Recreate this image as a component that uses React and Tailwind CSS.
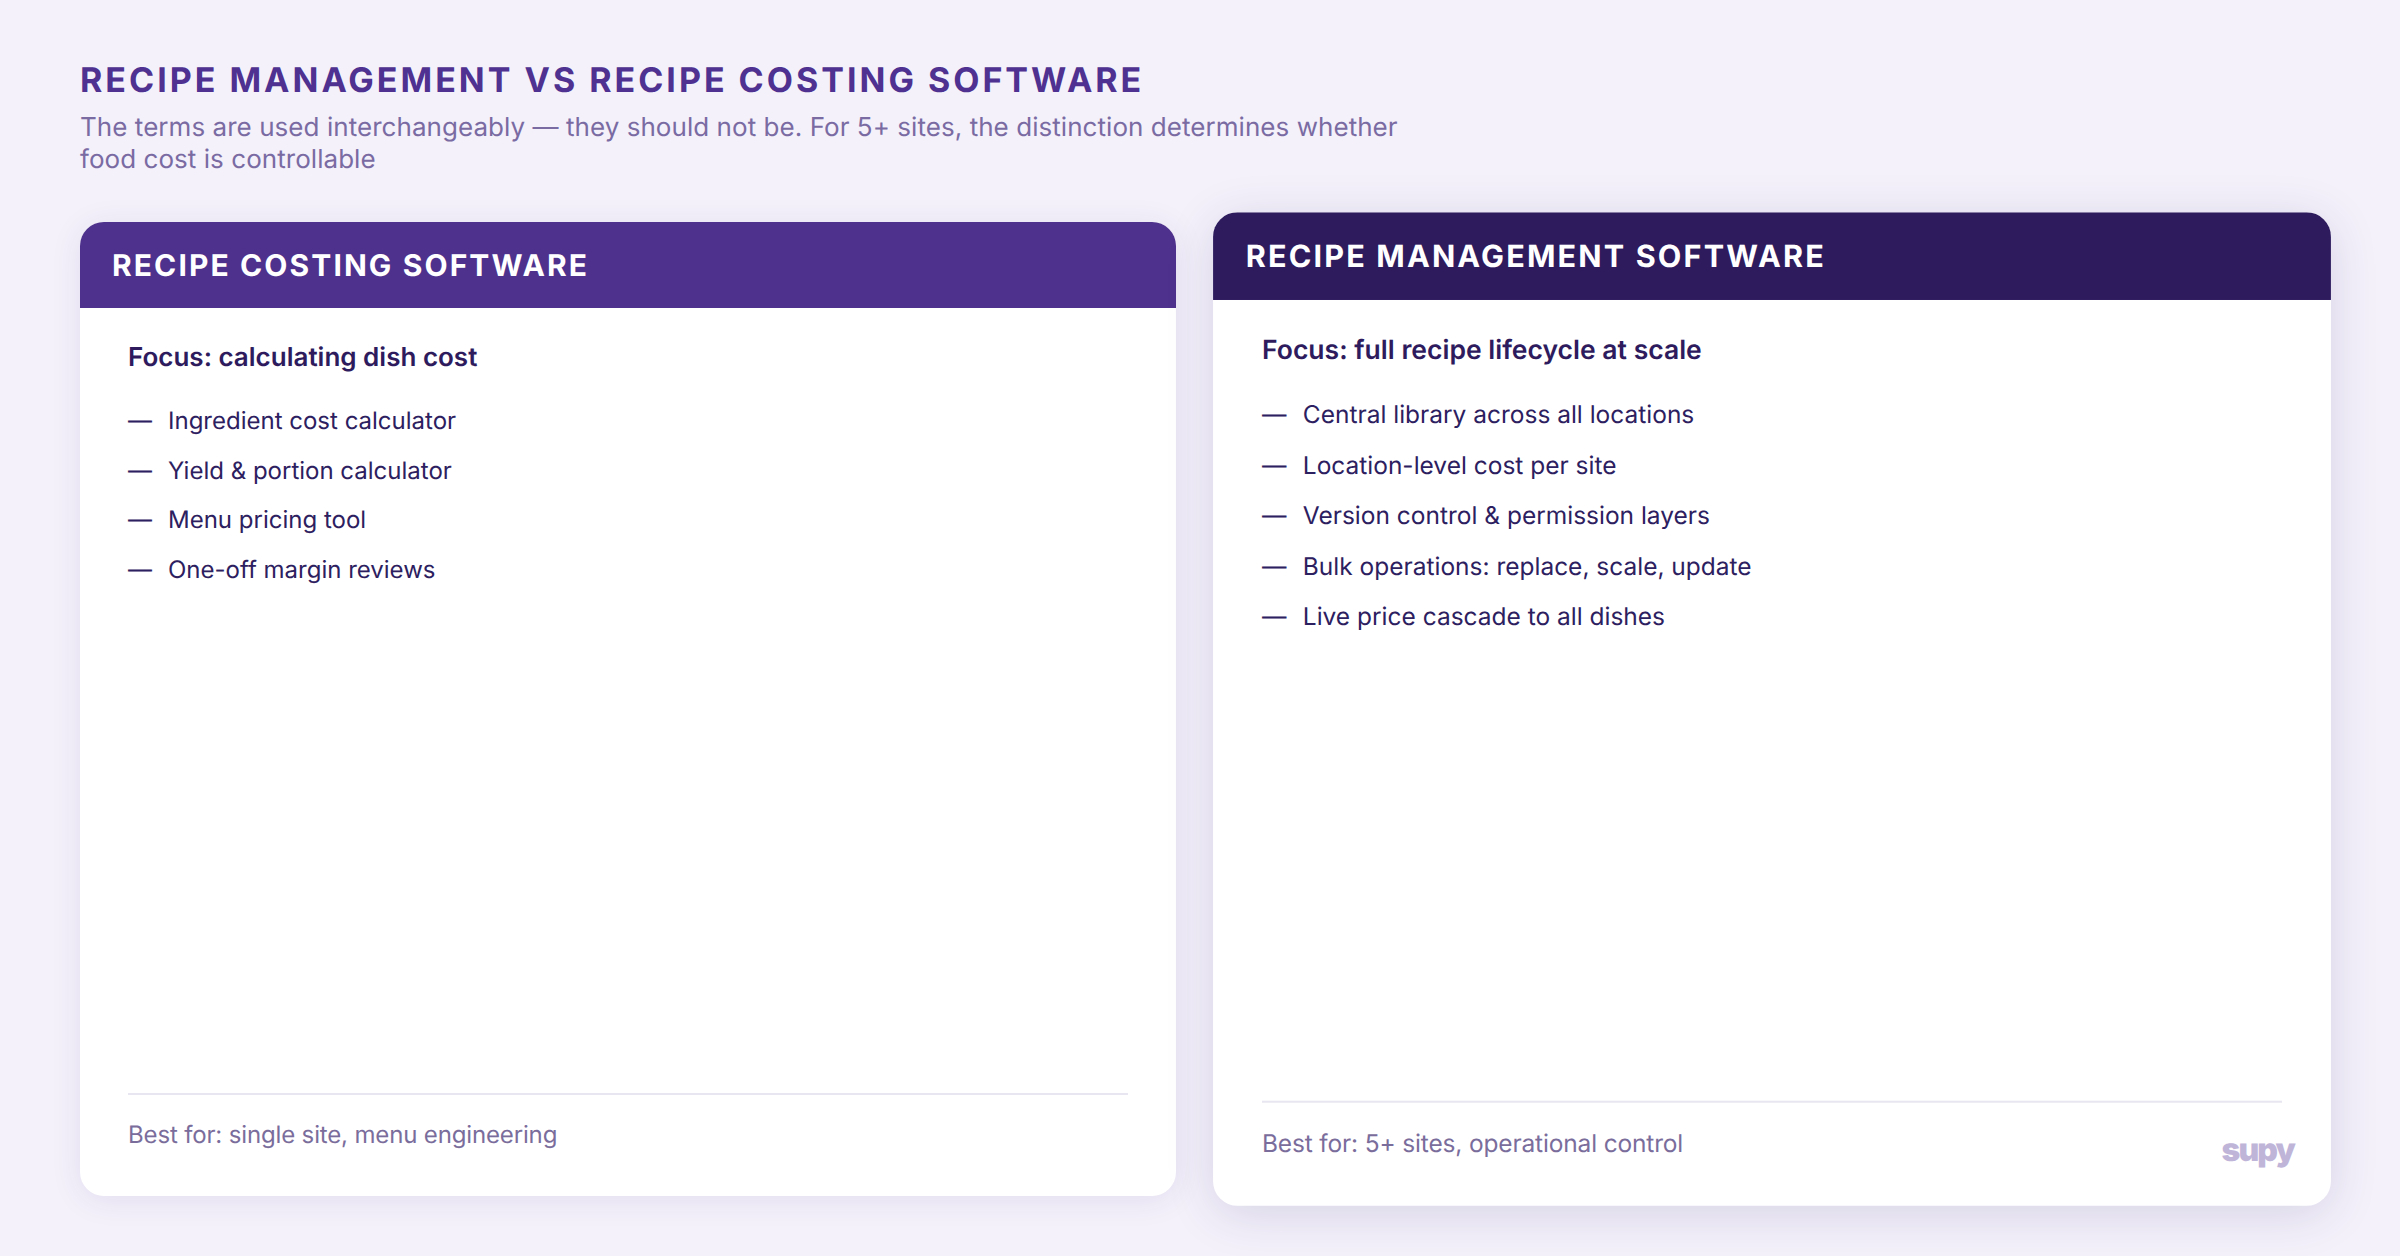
import React from 'react';

const Card = ({ title, focus, items, best, head, big }) => (
  <div className={`flex flex-col bg-white rounded-3xl overflow-hidden ${big ? 'scale-[1.02] shadow-[0_8px_48px_rgba(45,27,94,0.14)]' : 'shadow-[0_4px_32px_rgba(45,27,94,0.09)]'}`}>
    <div className={`h-[86px] px-8 pt-0.5 flex items-center text-white text-[30px] font-bold tracking-[0.07em] ${head}`}>
      {title}
    </div>
    <div className='flex-1 flex flex-col px-12 pt-8'>
      <div className='text-[26px] leading-[36px] font-semibold text-[#2d1b5e]'>{focus}</div>
      <ul className='flex flex-col gap-4 mt-[28px] flex-1'>
        {items.map((it) => (
          <li key={it} className='flex gap-4 text-[24px] leading-[33.6px] text-[#2d2060]'>
            <span className='w-6'>—</span>
            {it}
          </li>
        ))}
      </ul>
      <div className='border-t-2 border-[#e8e6f0] pt-6 pb-[45px] text-[24px] leading-8 tracking-[-0.15px] text-[#7a6d9c]'>
        {best}
      </div>
    </div>
  </div>
);

export default function App() {
  return (
    <div className='relative w-[2400px] h-[1256px] bg-[#f4f1fb] px-20 pt-[59px] pb-[60px] flex flex-col overflow-hidden font-["Inter",sans-serif] [text-rendering:geometricPrecision]'>
      <h1 className='text-[34px] leading-[44px] font-bold tracking-[3px] text-[#4e3190]'>
        RECIPE MANAGEMENT VS RECIPE COSTING SOFTWARE
      </h1>
      <p className='text-[26px] leading-8 tracking-[0.05px] text-[#7a6ba3] max-w-[1360px] mt-[9px]'>
        The terms are used interchangeably — they should not be. For 5+ sites, the distinction determines whether food cost is controllable
      </p>
      <div className='grid grid-cols-2 gap-12 flex-1 mt-[46px]'>
        <Card
          title='RECIPE COSTING SOFTWARE'
          head='bg-[#4e318c]'
          focus='Focus: calculating dish cost'
          items={['Ingredient cost calculator', 'Yield & portion calculator', 'Menu pricing tool', 'One-off margin reviews']}
          best='Best for: single site, menu engineering'
        />
        <Card
          big
          title='RECIPE MANAGEMENT SOFTWARE'
          head='bg-[#2d1b5e]'
          focus='Focus: full recipe lifecycle at scale'
          items={['Central library across all locations', 'Location-level cost per site', 'Version control & permission layers', 'Bulk operations: replace, scale, update', 'Live price cascade to all dishes']}
          best='Best for: 5+ sites, operational control'
        />
      </div>
      <div className='absolute right-[106px] bottom-[86px] text-[32px] leading-10 font-black tracking-[-0.06em] text-[#bfb5d9]'>supy</div>
    </div>
  );
}
